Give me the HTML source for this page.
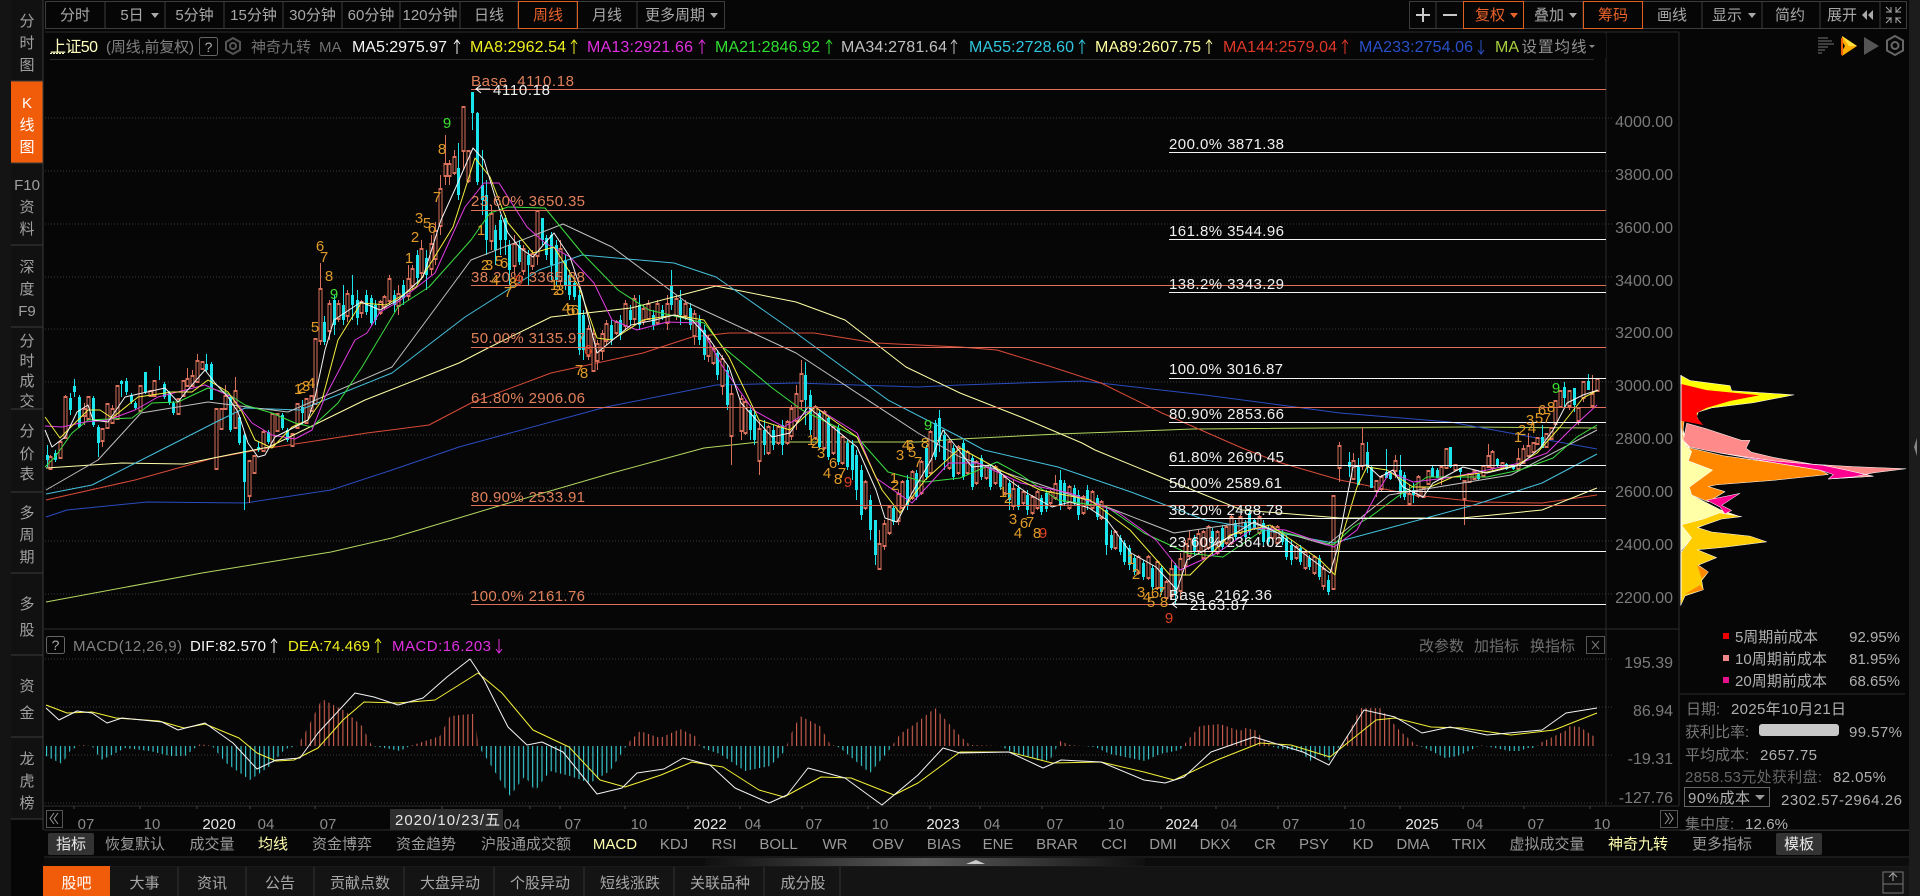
<!DOCTYPE html>
<html><head><meta charset="utf-8"><title>上证50</title>
<style>
html,body{margin:0;padding:0;background:#060606;width:1920px;height:896px;overflow:hidden}
svg{display:block;font-family:"Liberation Sans","Noto Sans CJK SC",sans-serif}
.g{fill:#a8a8a8;font-size:15px}
.s{fill:#a0a0a0;font-size:15px;text-anchor:middle}
.ax{fill:#7a7a7a;font-size:16px;text-anchor:end}
.xl{fill:#8a8a8a;font-size:15px;text-anchor:middle}
.xy{fill:#e8e8e8;font-size:15px;text-anchor:middle}
.fo{fill:#e0805a;font-size:15px}
.fw{fill:#f0f0f0;font-size:15px}
.n{fill:#e09a28;font-size:15px;text-anchor:middle}
.i{fill:#9a9a9a;font-size:15px;text-anchor:middle}
.t{fill:#a8a8a8;font-size:15px;text-anchor:middle}
.c{fill:#b0b0b0;font-size:15px}
.ma{font-size:16px}
.ln{fill:none;stroke-width:1;stroke-linejoin:round}
</style></head><body>
<svg xmlns="http://www.w3.org/2000/svg" width="1920" height="896" viewBox="0 0 1920 896">
<defs>
<linearGradient id="gs" x1="0" x2="1" y1="0" y2="0"><stop offset="0" stop-color="#101010"/><stop offset=".5" stop-color="#5a5a5a"/><stop offset="1" stop-color="#101010"/></linearGradient>
<pattern id="pr" patternUnits="userSpaceOnUse" x="46" y="0" width="4.63" height="10"><rect width="1.1" height="10" fill="#d06050"/></pattern>
<pattern id="pc" patternUnits="userSpaceOnUse" x="46" y="0" width="4.63" height="10"><rect width="1.1" height="10" fill="#38d0d8"/></pattern>
<clipPath id="cu"><rect x="44" y="640" width="1562" height="106"/></clipPath>
<clipPath id="cd"><rect x="44" y="746" width="1562" height="60"/></clipPath>
<path id="hp" d="M46 746L46 756L62 764L70 751L80 745L92 746L101 760L110 756L125 748L150 751L170 756L185 756L200 744L212 746L226 763L250 780L270 766L285 749L297 746L305 733L322 699L345 711L362 726L372 746L385 748L400 751L410 746L425 741L440 736L450 716L470 714L475 714L478 746L485 756L510 796L525 776L535 791L550 771L570 776L590 783L610 771L625 748L630 741L640 731L660 738L680 729L695 736L700 746L705 749L720 754L745 771L770 766L785 751L790 736L800 716L820 726L830 744L840 748L870 773L890 749L900 734L915 724L935 708L960 736L970 745L1000 746L1010 751L1040 761L1050 760L1060 741L1070 745L1095 747L1110 754L1145 761L1160 754L1180 750L1187 741L1200 726L1220 724L1240 731L1245 728L1255 730L1265 741L1275 748L1300 751L1310 761L1320 754L1330 761L1338 748L1345 741L1360 708L1380 708L1400 731L1415 744L1425 748L1445 758L1458 756L1475 748L1480 745L1490 747L1510 751L1520 751L1527 748L1535 748L1540 743L1565 731L1570 726L1580 727L1590 734L1597 738L1597 746Z"/>
<path id="rb" d="M50 458V468M60 443V457M65 398V437M84 410V415M88 398V418M102 430V440M107 405V427M112 410V422M117 387V418M140 387V410M150 392V395M154 382V395M178 400V413M183 382V395M187 380V385M192 377V385M197 362V381M202 363V368M216 410V468M221 410V428M225 397V408M235 392V427M249 462V495M254 457V472M263 433V450M272 415V445M277 415V430M292 435V445M297 405V427M306 400V422M311 397V410M315 340V403M320 290V340M329 305V330M338 305V318M347 295V315M361 303V312M380 303V312M384 298V306M389 280V300M398 295V305M408 280V295M412 270V285M421 250V272M431 245V268M435 232V258M440 190V225M445 165V175M449 165V175M454 158V172M463 108V150M468 152V180M491 215V240M514 245V265M523 250V270M532 255V265M537 212V255M560 250V280M588 330V355M593 335V370M597 345V360M602 335V350M606 325V340M616 323V332M625 305V325M634 300V318M643 310V320M648 305V318M657 305V322M667 305V322M676 300V315M685 305V315M694 315V335M708 340V355M713 350V362M722 360V385M731 395V435M741 400V430M745 403V432M759 430V460M768 428V452M778 428V442M787 423V442M791 410V435M796 395V420M801 375V400M815 408V437M824 413V447M833 428V452M842 438V462M865 483V507M879 545V568M884 525V545M889 508V532M898 495V520M902 483V507M912 473V497M921 463V492M930 433V472M949 443V467M958 448V472M967 453V472M976 463V482M986 468V477M995 468V482M1004 478V492M1013 490V505M1023 493V502M1032 498V512M1037 493V507M1050 493V502M1055 485V497M1069 488V507M1083 498V512M1092 493V507M1101 503V517M1115 533V547M1138 558V572M1148 558V577M1157 563V587M1166 583V597M1171 570V595M1180 560V590M1185 545V565M1189 540V555M1198 535V550M1203 533V557M1208 528V547M1217 533V552M1226 528V542M1231 518V542M1240 518V532M1259 518V532M1272 528V537M1277 528V542M1296 548V557M1305 553V567M1314 558V572M1323 570V585M1333 497V588M1339 447V467M1353 462V478M1362 445V465M1376 482V490M1381 478V488M1395 462V470M1409 495V503M1418 478V495M1423 489V496M1428 472V483M1441 468V478M1446 450V467M1455 466V469M1464 482V498M1469 475V481M1474 472V478M1483 467V475M1488 457V466M1492 453V467M1502 464V467M1518 460V468M1523 450V462M1528 447V455M1533 444V451M1537 439V443M1546 435V446M1551 429V438M1555 402V423M1560 392V406M1569 392V405M1578 409V420M1583 383V397M1592 395V405M1597 380V390"/>
</defs>
<rect width="1920" height="896" fill="#060606"/>
<!-- outer bands -->
<rect x="0" y="0" width="11" height="896" fill="#141414"/>
<rect x="1909" y="0" width="11" height="896" fill="#1c1c1c"/>
<path d="M1917 438l-3 9 3 9z" fill="#888"/>
<!-- sidebar -->
<rect x="11" y="0" width="32" height="819" fill="#111"/>
<rect x="11" y="81" width="32" height="82" fill="#f05c0a"/>
<g stroke="#3c3c3c" shape-rendering="crispEdges"><path d="M11 81H43M11 163H43M11 245H43M11 327H43M11 409H43M11 492H43M11 573H43M11 655H43M11 737H43M11 819H43M43 0V830"/></g>
<g>
<text class="s" x="27" y="26">分</text><text class="s" x="27" y="48">时</text><text class="s" x="27" y="70">图</text>
<text class="s" x="27" y="108" style="fill:#fff">K</text><text class="s" x="27" y="130" style="fill:#fff">线</text><text class="s" x="27" y="152" style="fill:#fff">图</text>
<text class="s" x="27" y="190">F10</text><text class="s" x="27" y="212">资</text><text class="s" x="27" y="234">料</text>
<text class="s" x="27" y="272">深</text><text class="s" x="27" y="294">度</text><text class="s" x="27" y="316">F9</text>
<text class="s" x="27" y="346">分</text><text class="s" x="27" y="366">时</text><text class="s" x="27" y="386">成</text><text class="s" x="27" y="406">交</text>
<text class="s" x="27" y="436">分</text><text class="s" x="27" y="459">价</text><text class="s" x="27" y="479">表</text>
<text class="s" x="27" y="518">多</text><text class="s" x="27" y="540">周</text><text class="s" x="27" y="562">期</text>
<text class="s" x="27" y="609">多</text><text class="s" x="27" y="635">股</text>
<text class="s" x="27" y="691">资</text><text class="s" x="27" y="718">金</text>
<text class="s" x="27" y="764">龙</text><text class="s" x="27" y="786">虎</text><text class="s" x="27" y="808">榜</text>
</g>
<!-- top toolbar left -->
<rect x="45.500" y="1.500" width="679" height="27" fill="none" stroke="#3c3c3c"/>
<path d="M105 2V28M165 2V28M224 2V28M283 2V28M342 2V28M400 2V28M460 2V28M518 2V28M577 2V28M637 2V28" stroke="#3c3c3c" shape-rendering="crispEdges"/>
<rect x="518.500" y="1.500" width="59" height="27" fill="none" stroke="#e0601c"/>
<g>
<text class="t" x="75" y="20">分时</text><text class="t" x="132" y="20">5日</text><path d="M151 13h8l-4 5z" fill="#aaa"/>
<text class="t" x="194.500" y="20">5分钟</text><text class="t" x="253.500" y="20">15分钟</text><text class="t" x="312.500" y="20">30分钟</text><text class="t" x="371" y="20">60分钟</text><text class="t" x="430" y="20">120分钟</text>
<text class="t" x="489" y="20">日线</text><text class="t" x="548" y="20" style="fill:#e8622a">周线</text><text class="t" x="607" y="20">月线</text>
<text class="t" x="675" y="20">更多周期</text><path d="M710 13h8l-4 5z" fill="#aaa"/>
</g>
<!-- top toolbar right -->
<rect x="1409.500" y="1.500" width="497" height="27" fill="none" stroke="#3c3c3c"/>
<path d="M1436 2V28M1583 2V28M1702 2V28M1762 2V28M1820 2V28M1880 2V28" stroke="#3c3c3c" shape-rendering="crispEdges"/>
<rect x="1463.500" y="1.500" width="60" height="27" fill="none" stroke="#e0601c"/>
<rect x="1583.500" y="1.500" width="59" height="27" fill="none" stroke="#e0601c"/>
<path d="M1416 15h14M1423 8v14" stroke="#c8c8c8" stroke-width="2"/><path d="M1443 15h14" stroke="#c8c8c8" stroke-width="2"/>
<text class="t" x="1490" y="20" style="fill:#e8622a">复权</text><path d="M1510 13h8l-4 5z" fill="#e8622a"/>
<text class="t" x="1549" y="20">叠加</text><path d="M1569 13h8l-4 5z" fill="#aaa"/>
<text class="t" x="1613" y="20" style="fill:#e8622a">筹码</text>
<text class="t" x="1672" y="20">画线</text>
<text class="t" x="1727" y="20">显示</text><path d="M1748 13h8l-4 5z" fill="#aaa"/>
<text class="t" x="1790" y="20">简约</text>
<text class="t" x="1842" y="20">展开</text><path d="M1867 10l-5 5 5 5zM1873 10l-5 5 5 5z" fill="#aaa"/>
<path d="M1886 7l5 5v-5M1901 7l-5 5v-5M1886 23l5-5v5M1901 23l-5-5v5M1886 12h5M1901 12h-5M1886 18h5M1901 18h-5" stroke="#aaa" fill="none"/>
<!-- frames -->
<path d="M45 32H1679M1606 32V806M1679 32V806M44 629H1679M44 806H1679M44 830H1909M44 857H1909M44 866H1909M1680 694H1905" stroke="#2c2c2c" shape-rendering="crispEdges"/>
<path d="M50 59.500H1594" stroke="#2a2a2a" shape-rendering="crispEdges"/>
<!-- grid -->
<g stroke="#3a3a3a" stroke-dasharray="1 2" shape-rendering="crispEdges">
<path d="M45 118H1612M45 171H1612M45 224H1612M45 277H1612M45 329H1612M45 382H1612M45 435H1612M45 488H1612M45 541H1612M45 594H1612M45 659H1612M45 707H1612M45 755H1612M45 803H1612"/>
</g>
<!-- MA long lines -->
<polyline class="ln" stroke="#b4d860" points="46,602 202,573 331,552 392,538 502,505 612,473 704,448 759,442 918,442 960,439 1058,434 1193,429 1462,427 1597,428"/>
<polyline class="ln" stroke="#2a4cc0" stroke-width="1.500" points="46,517 67,510 147,502 245,503 331,490 392,470 459,447 606,407 716,385 796,383 918,387 960,385 1082,381 1205,395 1340,413 1450,422 1597,449"/>
<polyline class="ln" stroke="#d84a38" points="46,500 135,480 214,458 269,448 367,433 429,425 471,403 551,373 643,353 692,337 729,333 814,333 876,343 960,347 997,350 1052,367 1101,383 1162,413 1242,448 1278,462 1340,480 1413,495 1480,502 1542,503 1597,495"/>
<!-- candles -->
<g transform="translate(.5 0)" shape-rendering="crispEdges" fill="none">
<path stroke="#d8705c" d="M50 455V470M60 440V458M65 395V437M84 403V425M88 398V420M102 428V447M107 403V427M112 405V422M117 387V418M140 387V412M150 390V396M154 382V397M178 398V413M183 382V397M187 368V387M192 370V385M197 354V381M202 363V368M216 410V468M221 408V430M225 385V408M235 377V427M249 462V503M254 457V472M263 430V450M272 415V445M277 415V430M292 435V447M297 403V427M306 400V422M311 397V410M315 340V403M320 263V345M329 300V340M338 300V322M347 290V322M361 300V318M380 300V315M384 295V310M389 275V305M398 285V315M408 265V300M412 265V290M421 240V280M431 235V275M435 222V265M440 175V235M445 135V185M449 160V185M454 150V175M463 108V170M468 150V183M491 205V250M514 235V275M523 245V275M532 250V270M537 210V265M560 240V285M588 325V360M593 328V372M597 340V370M602 330V360M606 320V345M616 320V335M625 300V330M634 295V325M643 305V325M648 300V320M657 300V325M667 295V330M676 295V320M685 300V320M694 310V345M708 335V362M713 345V365M722 355V395M731 385V465M741 395V440M745 400V435M759 420V475M768 425V455M778 425V445M787 420V445M791 405V440M796 385V430M801 360V410M815 405V440M824 410V450M833 425V455M842 435V465M865 480V510M879 530V570M884 520V550M889 505V535M898 490V525M902 480V510M912 470V500M921 460V495M930 430V475M949 440V470M958 445V475M967 450V475M976 460V485M986 465V480M995 465V485M1004 475V495M1013 480V510M1023 490V505M1032 495V515M1037 490V510M1050 490V505M1055 475V500M1069 485V510M1083 495V515M1092 490V510M1101 500V520M1115 530V550M1138 555V575M1148 555V580M1157 560V590M1166 580V600M1171 560V600M1180 553V600M1185 540V575M1189 530V560M1198 530V555M1203 530V560M1208 525V550M1217 530V555M1226 525V545M1231 515V545M1240 515V535M1259 515V535M1272 525V540M1277 525V545M1296 545V560M1305 550V570M1314 555V575M1323 565V590M1333 496V590M1339 442V482M1353 453V480M1362 427V470M1376 482V497M1381 475V492M1395 455V478M1409 485V505M1418 475V498M1423 487V498M1428 472V485M1441 467V485M1446 450V468M1455 465V470M1464 482V525M1469 473V483M1474 470V480M1483 465V477M1488 444V467M1492 450V470M1502 463V468M1518 448V470M1523 445V463M1528 433V455M1533 442V453M1537 437V445M1546 433V448M1551 427V440M1555 402V425M1560 390V408M1569 392V410M1578 407V425M1583 383V402M1592 375V405M1597 380V392"/>
<use href="#rb" stroke="#d8705c" stroke-width="4" stroke-linecap="square"/>
<use href="#rb" stroke="#070707" stroke-width="2"/>
<path stroke="#1ce4ec" d="M47 445V467M55 450V462M70 393V415M74 379V397M79 395V428M93 396V427M98 425V457M121 380V397M126 378V395M131 393V404M135 401V410M145 372V394M159 366V380M164 382V399M169 391V405M173 401V415M206 354V372M211 362V400M230 395V432M239 415V445M244 433V510M258 442V452M268 430V444M282 413V430M287 428V442M302 400V425M324 316V345M334 295V335M343 285V325M352 275V320M357 290V325M366 290V315M371 295V325M375 300V325M394 290V312M403 280V305M417 250V285M426 250V290M458 143V200M472 92V130M477 112V185M482 150V215M486 180V255M495 225V265M500 215V255M505 215V255M509 240V285M519 240V265M528 250V285M542 218V245M546 235V260M551 232V280M556 240V285M565 255V290M569 270V300M574 280V300M579 290V355M583 310V360M611 320V345M620 315V340M630 305V325M639 295V330M653 310V330M662 305V320M671 270V310M680 290V325M690 303V330M699 315V345M704 325V360M717 350V380M727 365V410M750 405V440M754 410V445M764 420V455M773 425V450M782 420V455M805 362V425M810 390V435M819 410V450M828 415V460M838 425V465M847 440V470M852 440V480M856 450V500M861 465V520M870 495V540M875 520V565M893 505V525M907 475V510M916 470V500M926 445V480M935 420V460M939 410V452M944 430V470M953 445V480M963 440V480M972 455V490M981 455V480M990 465V490M1000 470V490M1009 480V510M1018 485V510M1027 490V515M1041 495V515M1046 490V512M1060 470V510M1064 480V505M1074 485V505M1078 490V520M1087 485V510M1097 495V520M1106 505V555M1111 530V550M1120 535V555M1124 540V565M1129 545V570M1134 555V575M1143 560V580M1152 565V590M1161 565V595M1175 563V605M1194 535V555M1212 528V555M1222 525V550M1235 520V540M1245 520V540M1249 510V535M1254 518V530M1263 520V545M1268 525V545M1282 530V545M1286 535V560M1291 540V565M1300 545V565M1309 555V570M1319 555V580M1328 575V595M1349 452V477M1358 458V485M1367 442V473M1371 465V488M1386 449V478M1390 472V480M1400 455V498M1404 472V500M1413 483V503M1432 465V477M1437 468V478M1450 447V468M1460 468V480M1478 473V480M1497 458V467M1506 463V470M1513 465V470M1542 425V448M1564 382V407M1574 388V412M1588 374V390"/>
<path stroke="#1ce4ec" stroke-width="3" d="M47 455V460M55 453V460M70 398V410M74 386V392M79 397V427M93 398V425M98 427V443M121 381V384M126 381V392M131 395V402M135 403V408M145 372V392M164 384V397M169 393V403M173 403V413M206 364V370M211 364V400M230 397V430M239 417V443M244 435V482M258 447V450M268 432V442M282 415V428M287 430V440M302 407V413M324 322V342M334 300V325M343 305V320M352 295V305M357 300V318M366 295V312M371 298V323M375 305V320M394 295V305M403 285V298M417 255V278M426 258V275M458 168V195M472 92V113M477 113V182M482 185V200M486 195V240M495 230V250M500 220V240M505 218V240M509 245V270M519 245V262M528 255V265M542 218V240M546 238V255M551 235V265M556 245V280M565 260V285M569 275V295M574 283V297M579 295V350M583 315V350M611 325V340M620 320V335M630 310V320M639 305V325M653 315V325M662 310V318M671 285V305M680 300V315M690 308V325M699 320V340M704 330V355M717 353V375M727 370V405M750 410V430M754 415V440M764 430V445M773 430V445M782 425V445M805 375V400M810 395V430M819 413V447M828 418V457M838 428V462M847 443V467M852 445V470M856 455V490M861 470V515M870 500V530M875 520V555M893 508V522M907 480V505M916 473V497M926 448V477M935 423V457M939 418V440M944 435V460M953 448V477M963 443V477M972 458V487M981 458V477M990 468V487M1000 473V487M1009 483V500M1018 488V507M1027 495V510M1041 498V512M1046 493V509M1060 480V505M1064 483V502M1074 488V502M1078 495V515M1087 490V505M1097 498V517M1106 510V545M1111 535V548M1120 538V552M1124 543V562M1129 548V565M1134 558V572M1143 563V577M1152 568V587M1161 568V592M1175 565V595M1194 538V552M1212 531V552M1222 528V547M1235 523V537M1245 523V537M1249 513V532M1254 520V528M1263 523V542M1268 528V542M1282 533V542M1286 538V557M1291 545V560M1300 548V562M1309 558V567M1319 558V577M1328 580V592M1349 462V467M1358 467V485M1367 452V467M1371 467V488M1386 472V478M1390 473V479M1400 470V492M1404 475V497M1413 490V495M1432 468V477M1437 470V478M1450 447V467M1460 468V472M1478 474V479M1497 459V466M1506 464V469M1513 466V469M1542 437V448M1564 387V398M1574 388V405M1588 381V390"/>
</g>
<polyline class="ln" stroke="#ffffa8" points="46,468 122,463 184,464 233,454 269,447 365,400 459,363 490,347 551,317 631,308 716,286 796,302 845,320 906,367 960,393 1021,417 1082,443 1095,450 1168,480 1242,510 1340,518 1462,518 1542,510 1597,488"/>
<polyline class="ln" stroke="#45c0dc" points="46,494 92,485 165,448 220,420 245,408 300,410 392,373 465,317 539,270 582,255 674,263 716,277 796,333 888,400 960,437 984,450 1058,467 1131,492 1205,520 1291,535 1333,543 1389,528 1474,505 1542,483 1597,454"/>
<polyline class="ln" stroke="#c0c0c0" points="46,490 98,460 141,413 208,402 288,412 392,367 471,260 563,224 612,247 686,302 796,353 918,433 960,457 1021,478 1107,507 1174,533 1248,522 1327,545 1389,495 1511,475 1597,430"/>
<polyline class="ln" stroke="#3ce040" points="45,467 55,457 72,433 88,420 132,418 152,403 178,402 208,388 225,392 245,405 272,413 295,423 312,427 338,403 362,367 398,307 429,287 471,240 490,213 508,207 545,208 582,253 618,290 649,310 704,323 723,347 771,387 802,410 857,437 888,472 925,482 960,478 997,462 1021,475 1058,500 1107,507 1144,533 1187,553 1223,557 1266,528 1303,537 1333,545 1353,527 1370,517 1397,497 1427,477 1460,477 1487,477 1520,470 1553,458 1577,437 1597,425"/>
<polyline class="ln" stroke="#e23ce2" points="45,426 62,427 85,422 108,420 135,410 158,397 205,385 232,397 252,423 272,435 295,439 312,430 325,397 355,340 367,333 380,312 398,302 435,273 465,207 484,183 499,183 527,227 545,243 570,257 594,283 612,320 637,330 667,322 698,323 723,367 753,410 784,427 815,407 857,433 876,478 912,503 949,463 978,463 1021,483 1070,493 1119,513 1156,540 1180,570 1217,553 1254,528 1285,530 1334,547 1357,530 1377,493 1390,472 1413,482 1430,480 1453,477 1487,470 1520,463 1547,453 1573,427 1597,405"/>
<polyline class="ln" stroke="#f4f040" points="45,417 60,438 88,410 100,410 112,418 138,397 172,392 192,392 208,380 228,392 242,412 255,440 272,448 292,427 308,420 322,400 338,340 361,303 386,305 416,287 453,227 475,158 490,177 508,223 533,253 554,247 579,287 597,338 612,340 643,320 674,315 704,320 729,357 759,420 790,430 815,407 857,437 882,490 900,513 925,480 960,448 1000,470 1040,490 1090,500 1130,530 1170,575 1190,575 1230,535 1270,525 1320,560 1335,575 1340,543 1357,487 1367,467 1387,470 1413,487 1430,487 1453,477 1487,472 1517,465 1537,453 1560,427 1583,398 1598,390"/>
<polyline class="ln" stroke="#f4f4f4" points="45,430 52,447 65,437 77,412 88,405 93,420 108,422 125,397 165,388 178,402 185,393 205,370 215,383 228,397 238,412 248,443 258,457 265,455 275,437 295,427 308,420 315,397 325,350 334,320 361,302 380,310 398,300 423,277 441,220 456,187 473,148 484,160 496,200 508,233 520,248 533,257 545,243 554,233 570,257 582,293 597,353 615,338 631,325 655,320 674,315 692,320 710,340 729,367 741,403 772,437 790,433 808,407 824,420 857,447 876,490 885,518 897,522 912,493 931,460 943,430 972,467 991,465 1009,480 1027,493 1052,507 1070,502 1089,508 1107,520 1131,553 1156,567 1177,590 1187,560 1205,550 1229,537 1254,522 1278,533 1303,553 1330,573 1337,550 1347,497 1353,467 1367,465 1380,477 1393,470 1403,487 1423,497 1433,483 1463,467 1487,473 1520,465 1540,448 1553,430 1567,403 1583,395 1598,390"/>
<!-- fib lines -->
<path d="M471 89.500H1606M471 210.500H1606M471 285.500H1606M471 347.500H1606M471 407.500H1606M471 505.500H1606M471 604.500H1606" stroke="#e0705a" shape-rendering="crispEdges"/>
<path d="M1169 152.500H1606M1169 239.500H1606M1169 292.500H1606M1169 378.500H1606M1169 422.500H1606M1169 465.500H1606M1169 491.500H1606M1169 518.500H1606M1169 551.500H1606M1169 604.500H1606" stroke="#f4f4f4" shape-rendering="crispEdges"/>
<!-- fib labels -->
<g>
<text class="fo" x="471" y="86" textLength="103">Base &#160;4110.18</text>
<text class="fw" x="493" y="95" textLength="57">4110.18</text><path d="M490 89h-14m5-4l-5 4 5 4" stroke="#fff" fill="none"/>
<text class="fo" x="471" y="206" textLength="114">23.60% 3650.35</text>
<text class="fo" x="471" y="282" textLength="114">38.20% 3365.88</text>
<text class="fo" x="471" y="343" textLength="114">50.00% 3135.97</text>
<text class="fo" x="471" y="403" textLength="114">61.80% 2906.06</text>
<text class="fo" x="471" y="502" textLength="114">80.90% 2533.91</text>
<text class="fo" x="471" y="601" textLength="114">100.0% 2161.76</text>
<text class="fw" x="1169" y="149" textLength="115">200.0% 3871.38</text>
<text class="fw" x="1169" y="236" textLength="115">161.8% 3544.96</text>
<text class="fw" x="1169" y="289" textLength="115">138.2% 3343.29</text>
<text class="fw" x="1169" y="374" textLength="114">100.0% 3016.87</text>
<text class="fw" x="1169" y="419" textLength="115">80.90% 2853.66</text>
<text class="fw" x="1169" y="462" textLength="115">61.80% 2690.45</text>
<text class="fw" x="1169" y="488" textLength="113">50.00% 2589.61</text>
<text class="fw" x="1169" y="515" textLength="114">38.20% 2488.78</text>
<text class="fw" x="1169" y="547" textLength="114">23.60% 2364.02</text>
<text class="fw" x="1169" y="600" textLength="103">Base &#160;2162.36</text>
<text class="fw" x="1190" y="610" textLength="58">2163.87</text><path d="M1187 604h-15m5-4l-5 4 5 4" stroke="#fff" fill="none"/>
</g>
<!-- nine-turn digits -->
<g>
<text class="n" x="447" y="128" style="fill:#3ce030">9</text><text class="n" x="442" y="154">8</text><text class="n" x="437" y="202">7</text><text class="n" x="419" y="223">3</text><text class="n" x="427" y="228">5</text><text class="n" x="432" y="233">6</text><text class="n" x="415" y="242">2</text><text class="n" x="409" y="263">1</text>
<text class="n" x="320" y="251">6</text><text class="n" x="324" y="262">7</text><text class="n" x="329" y="281">8</text><text class="n" x="334" y="299" style="fill:#3ce030">9</text><text class="n" x="315" y="332">5</text>
<text class="n" x="298" y="394">1</text><text class="n" x="302" y="393">2</text><text class="n" x="306" y="391">3</text><text class="n" x="311" y="388">4</text>
<text class="n" x="481" y="235">1</text><text class="n" x="485" y="270">2</text><text class="n" x="489" y="270">3</text><text class="n" x="499" y="266">5</text><text class="n" x="504" y="268">6</text><text class="n" x="495" y="285">4</text><text class="n" x="513" y="288">8</text><text class="n" x="519" y="285" style="fill:#e04020">9</text><text class="n" x="508" y="297">7</text>
<text class="n" x="554" y="290">1</text><text class="n" x="557" y="295">2</text><text class="n" x="560" y="295">3</text><text class="n" x="566" y="313">4</text><text class="n" x="571" y="315">5</text><text class="n" x="575" y="315">6</text>
<text class="n" x="588" y="355" style="fill:#e04020">6</text><text class="n" x="579" y="375">7</text><text class="n" x="584" y="378">8</text>
<text class="n" x="811" y="445">1</text><text class="n" x="815" y="448">2</text><text class="n" x="821" y="458">3</text><text class="n" x="833" y="468">6</text><text class="n" x="827" y="478">4</text><text class="n" x="842" y="478">7</text><text class="n" x="838" y="484">8</text><text class="n" x="848" y="487" style="fill:#e04020">9</text>
<text class="n" x="894" y="483">1</text><text class="n" x="895" y="490">2</text><text class="n" x="928" y="430" style="fill:#3ce030">9</text><text class="n" x="900" y="460">3</text><text class="n" x="912" y="457">5</text><text class="n" x="918" y="467">7</text><text class="n" x="906" y="450">4</text><text class="n" x="910" y="450">6</text><text class="n" x="925" y="448">8</text>
<text class="n" x="1003" y="497">1</text><text class="n" x="1008" y="503">2</text><text class="n" x="1013" y="524">3</text><text class="n" x="1024" y="528">6</text><text class="n" x="1030" y="527">7</text><text class="n" x="1018" y="538">4</text><text class="n" x="1037" y="538">8</text><text class="n" x="1043" y="538" style="fill:#e04020">9</text>
<text class="n" x="1131" y="564">1</text><text class="n" x="1136" y="579">2</text><text class="n" x="1141" y="597">3</text><text class="n" x="1147" y="602">4</text><text class="n" x="1155" y="598">6</text><text class="n" x="1161" y="597">7</text><text class="n" x="1151" y="607">5</text><text class="n" x="1164" y="607">8</text><text class="n" x="1169" y="623" style="fill:#e04020">9</text>
<text class="n" x="1556" y="393" style="fill:#3ce030">9</text><text class="n" x="1551" y="412">8</text><text class="n" x="1542" y="415">6</text><text class="n" x="1530" y="425">3</text><text class="n" x="1539" y="423">5</text><text class="n" x="1547" y="423">7</text><text class="n" x="1522" y="435">2</text><text class="n" x="1532" y="433">4</text><text class="n" x="1518" y="442">1</text>
</g>
<!-- info row -->
<rect x="46" y="34" width="1560" height="24" fill="#060606"/>
<text x="50" y="52" font-size="16" fill="#ffffc0" textLength="48">上证50</text>
<path d="M50 53.500h14" stroke="#ffffc0" stroke-dasharray="2 1"/>
<text x="106" y="52" font-size="15" fill="#808080" textLength="88">(周线,前复权)</text>
<rect x="199.500" y="37.500" width="18" height="18" rx="2" fill="none" stroke="#666"/><text x="208.500" y="52" font-size="14" fill="#aaa" text-anchor="middle">?</text>
<path d="M233 38l7 4v8l-7 4-7-4v-8z" fill="none" stroke="#555" stroke-width="2"/><circle cx="233" cy="46" r="3" fill="none" stroke="#555" stroke-width="2"/>
<text x="251" y="52" font-size="15" fill="#707070">神奇九转</text>
<text x="319" y="52" font-size="15" fill="#707070">MA</text>
<g class="ma">
<text x="352" y="52" fill="#f4f4f4" textLength="95">MA5:2975.97</text>
<text x="470" y="52" fill="#f0f020" textLength="96">MA8:2962.54</text>
<text x="587" y="52" fill="#e030e0" textLength="106">MA13:2921.66</text>
<text x="715" y="52" fill="#30e030" textLength="105">MA21:2846.92</text>
<text x="841" y="52" fill="#c0c0c0" textLength="106">MA34:2781.64</text>
<text x="969" y="52" fill="#30c8e0" textLength="105">MA55:2728.60</text>
<text x="1095" y="52" fill="#ffffa0" textLength="106">MA89:2607.75</text>
<text x="1223" y="52" fill="#e03828" textLength="114">MA144:2579.04</text>
<text x="1359" y="52" fill="#2850c8" textLength="114">MA233:2754.06</text>
<text x="1495" y="52" fill="#a8d040">MA</text>
<text x="1521.500" y="52" font-size="15.500" fill="#909090" textLength="65">设置均线</text>
</g>
<path d="M1589 45h6l-3 3z" fill="#888"/>
<g fill="none" stroke-width="1">
<path d="M457 54V40m-3 4l3-4 3 4" stroke="#f4f4f4"/><path d="M574 54V40m-3 4l3-4 3 4" stroke="#f0f020"/><path d="M702 54V40m-3 4l3-4 3 4" stroke="#e030e0"/><path d="M829 54V40m-3 4l3-4 3 4" stroke="#30e030"/><path d="M954 54V40m-3 4l3-4 3 4" stroke="#c0c0c0"/><path d="M1082 54V40m-3 4l3-4 3 4" stroke="#30c8e0"/><path d="M1209 54V40m-3 4l3-4 3 4" stroke="#ffffa0"/><path d="M1345 54V40m-3 4l3-4 3 4" stroke="#e03828"/><path d="M1481 40v14m-3-4l3 4 3-4" stroke="#2850c8"/>
</g>
<!-- right panel icons -->
<path d="M1818 38h10M1818 41h14M1818 44h16M1818 47h10M1818 50h7M1818 53h4" stroke="#777"/>
<path d="M1842 36l15 10-15 10v-5l3-5-3-5z" fill="#ffb000"/><path d="M1842 36l15 10-8 0z" fill="#ffe040"/><path d="M1842 38v17" stroke="#f06000" stroke-width="2"/>
<path d="M1864 37l15 9-15 9z" fill="#555"/>
<path d="M1895 36l8 4.500v10l-8 4.500-8-4.500v-10z" fill="none" stroke="#666" stroke-width="2"/><circle cx="1895" cy="45.500" r="3.500" fill="none" stroke="#666" stroke-width="2"/>
<!-- price axis -->
<g>
<text class="ax" x="1673" y="127">4000.00</text><text class="ax" x="1673" y="180">3800.00</text><text class="ax" x="1673" y="233">3600.00</text><text class="ax" x="1673" y="286">3400.00</text><text class="ax" x="1673" y="338">3200.00</text><text class="ax" x="1673" y="391">3000.00</text><text class="ax" x="1673" y="444">2800.00</text><text class="ax" x="1673" y="497">2600.00</text><text class="ax" x="1673" y="550">2400.00</text><text class="ax" x="1673" y="603">2200.00</text>
<text class="ax" x="1673" y="668">195.39</text><text class="ax" x="1673" y="716">86.94</text><text class="ax" x="1673" y="764">-19.31</text><text class="ax" x="1673" y="803">-127.76</text>
</g>
<!-- MACD head -->
<rect x="46.500" y="636.500" width="18" height="17" rx="2" fill="none" stroke="#666"/><text x="55.500" y="650" font-size="14" fill="#aaa" text-anchor="middle">?</text>
<text x="73" y="651" font-size="15" fill="#808080" textLength="109">MACD(12,26,9)</text>
<text x="190" y="651" font-size="15" fill="#f4f4f4" textLength="76">DIF:82.570</text><path d="M274 653V639m-3 4l3-4 3 4" stroke="#f4f4f4" fill="none"/>
<text x="288" y="651" font-size="15" fill="#f0f020" textLength="82">DEA:74.469</text><path d="M378 653V639m-3 4l3-4 3 4" stroke="#f0f020" fill="none"/>
<text x="392" y="651" font-size="15" fill="#e030e0" textLength="99">MACD:16.203</text><path d="M499 639v14m-3-4l3 4 3-4" stroke="#e030e0" fill="none"/>
<text x="1419" y="651" font-size="15" fill="#707070">改参数</text><text x="1474" y="651" font-size="15" fill="#707070">加指标</text><text x="1530" y="651" font-size="15" fill="#707070">换指标</text>
<rect x="1586.500" y="636.500" width="18" height="17" fill="none" stroke="#555"/><path d="M1592 641l7 8m0-8l-7 8" stroke="#777"/>
<!-- MACD histogram + curves -->
<use href="#hp" fill="url(#pr)" clip-path="url(#cu)"/>
<use href="#hp" fill="url(#pc)" clip-path="url(#cd)"/>
<polyline class="ln" stroke="#f4f038" stroke-width="1.200" points="46,705 67,713 92,712 116,718 159,721 184,728 205,724 239,738 257,753 276,761 294,760 318,748 343,720 364,702 398,703 435,700 478,673 502,693 533,730 569,747 600,780 625,787 661,775 692,762 723,767 759,790 784,797 821,777 851,778 894,795 918,783 960,752 1009,752 1052,763 1101,762 1144,772 1174,780 1217,760 1260,743 1291,745 1330,757 1376,720 1395,718 1431,727 1462,728 1511,735 1554,730 1597,713"/>
<polyline class="ln" stroke="#f4f4f4" points="46,708 59,720 77,711 92,713 107,723 122,718 162,722 178,730 205,723 233,743 257,769 276,760 300,758 318,733 355,693 374,697 398,705 423,698 447,677 470,659 484,680 508,727 527,745 542,742 563,752 597,794 622,788 637,773 664,769 683,758 710,765 735,788 769,803 787,795 808,768 845,778 882,805 918,775 943,748 960,753 1009,752 1043,768 1061,760 1101,762 1144,780 1165,783 1184,777 1211,752 1254,737 1303,752 1329,765 1364,710 1395,717 1422,733 1450,727 1487,735 1542,730 1566,713 1597,708"/>
<!-- x axis -->
<path d="M74 806v3M140 806v3M197 806v3M250 806v3M315 806v3M442 806v3M530 806v3M560 806v3M625 806v3M688 806v3M740 806v3M802 806v3M868 806v3M930 806v3M980 806v3M1042 806v3M1103 806v3M1161 806v3M1216 806v3M1278 806v3M1345 806v3M1400 806v3M1463 806v3M1524 806v3M1590 806v3" stroke="#444"/>
<rect x="46.500" y="810.500" width="16" height="17" fill="none" stroke="#555"/><path d="M54 813l-4 5.500 4 5.500M58 813l-4 5.500 4 5.500" fill="none" stroke="#999"/>
<rect x="1660.500" y="810.500" width="17" height="17" fill="none" stroke="#555"/><path d="M1665 813l4 5.500-4 5.500M1669 813l4 5.500-4 5.500" fill="none" stroke="#999"/>
<g>
<text class="xl" x="86" y="829">07</text><text class="xl" x="152" y="829">10</text><text class="xy" x="219" y="829">2020</text><text class="xl" x="266" y="829">04</text><text class="xl" x="328" y="829">07</text>
<text class="xl" x="512" y="829">04</text><text class="xl" x="573" y="829">07</text><text class="xl" x="639" y="829">10</text><text class="xy" x="710" y="829">2022</text><text class="xl" x="753" y="829">04</text><text class="xl" x="814" y="829">07</text><text class="xl" x="880" y="829">10</text><text class="xy" x="943" y="829">2023</text><text class="xl" x="992" y="829">04</text><text class="xl" x="1055" y="829">07</text><text class="xl" x="1116" y="829">10</text><text class="xy" x="1182" y="829">2024</text><text class="xl" x="1229" y="829">04</text><text class="xl" x="1291" y="829">07</text><text class="xl" x="1357" y="829">10</text><text class="xy" x="1422" y="829">2025</text><text class="xl" x="1475" y="829">04</text><text class="xl" x="1536" y="829">07</text><text class="xl" x="1602" y="829">10</text>
</g>
<rect x="390" y="809" width="113" height="21" fill="#2e2e2e"/>
<text x="395" y="825" font-size="15" fill="#e4e4e4" textLength="105">2020/10/23/五</text>
<!-- indicator row -->
<rect x="48" y="833" width="46" height="22" rx="2" fill="#333"/>
<rect x="1776" y="833" width="46" height="22" rx="2" fill="#333"/>
<g>
<text class="i" x="71" y="849" style="fill:#e8e8e8">指标</text><text class="i" x="135" y="849">恢复默认</text><text class="i" x="212" y="849">成交量</text><text class="i" x="273" y="849" style="fill:#ffffb0">均线</text><text class="i" x="342" y="849">资金博弈</text><text class="i" x="426" y="849">资金趋势</text><text class="i" x="526" y="849">沪股通成交额</text><text class="i" x="615" y="849" style="fill:#ffffb0">MACD</text><text class="i" x="674" y="849">KDJ</text><text class="i" x="724" y="849">RSI</text><text class="i" x="778.500" y="849">BOLL</text><text class="i" x="835" y="849">WR</text><text class="i" x="888" y="849">OBV</text><text class="i" x="944" y="849">BIAS</text><text class="i" x="998" y="849">ENE</text><text class="i" x="1057" y="849">BRAR</text><text class="i" x="1114" y="849">CCI</text><text class="i" x="1163" y="849">DMI</text><text class="i" x="1215" y="849">DKX</text><text class="i" x="1265" y="849">CR</text><text class="i" x="1314" y="849">PSY</text><text class="i" x="1363" y="849">KD</text><text class="i" x="1413" y="849">DMA</text><text class="i" x="1469" y="849">TRIX</text><text class="i" x="1547" y="849">虚拟成交量</text><text class="i" x="1638" y="849" style="fill:#ffffb0">神奇九转</text><text class="i" x="1722" y="849">更多指标</text><text class="i" x="1799" y="849" style="fill:#e8e8e8">模板</text>
</g>
<!-- strip -->
<rect x="44" y="858" width="1865" height="8" fill="#0c0c0c"/>
<rect x="705" y="858" width="440" height="8" fill="url(#gs)"/>
<path d="M966 864h19l-9-4z" fill="#ccc"/>
<!-- tabs -->
<rect x="44" y="867" width="1865" height="29" fill="#141414"/>
<rect x="43" y="866" width="67" height="30" fill="#f05c0a"/>
<path d="M178 867V896M246 867V896M314 867V896M404 867V896M494 867V896M584 867V896M674 867V896M764 867V896M840 867V896" stroke="#333" shape-rendering="crispEdges"/>
<g>
<text class="t" x="76.500" y="888" style="fill:#fff">股吧</text><text class="t" x="144.500" y="888">大事</text><text class="t" x="212" y="888">资讯</text><text class="t" x="280" y="888">公告</text><text class="t" x="360" y="888">贡献点数</text><text class="t" x="450" y="888">大盘异动</text><text class="t" x="540" y="888">个股异动</text><text class="t" x="630" y="888">短线涨跌</text><text class="t" x="720" y="888">关联品种</text><text class="t" x="803" y="888">成分股</text>
</g>
<path d="M1883 872h20v12h-20zM1883 884h20v9h-20z" fill="none" stroke="#777" stroke-width="1"/><path d="M1893 873v8m-4-4l4-4 4 4" fill="none" stroke="#aaa"/>
<!-- chips -->
<g transform="translate(1640 360) scale(.33333 .34188)" stroke="#fff" stroke-width="1.500" stroke-linejoin="round">
<path fill="#ffffa8" d="M122 180L140 240L155 268L145 295L218 322L200 345L150 372L155 395L245 440L300 458L240 462L175 490L155 520L122 560Z"/>
<path fill="#ffcc00" d="M122 718L122 565L155 520L130 490L125 482L190 465L240 447L305 458L245 465L172 490L215 503L330 515L380 532L250 548L172 555L230 578L175 600L205 620L185 645L190 672L135 690Z"/>
<path fill="#ff8800" stroke="none" d="M135 685L180 658L190 672ZM172 600L205 620L185 640Z"/>
<path fill="#ff8800" d="M125 125L132 180L128 215L140 255L250 280L400 300L540 322L565 335L400 352L230 365L205 370L255 385L205 415L155 395L148 372L218 322L145 295L155 268L128 235L122 180Z"/>
<path fill="#ff0090" d="M240 272L400 295L550 308L620 322L700 340L565 348L580 335L540 322L400 300ZM200 410L300 390L245 425L275 440L255 450L240 430Z"/>
<path fill="#ff8a8a" d="M140 185L195 200L305 235L330 235L318 258L335 270L400 285L520 305L640 312L798 318L700 330L640 342L565 348L700 340L620 322L550 308L400 295L240 272L150 255L130 235Z"/>
<path fill="#ffff00" d="M122 45L150 60L270 75L275 90L462 102L340 125L215 140L175 152L170 165L180 185L122 70Z"/>
<path fill="#ff0000" stroke="none" d="M122 70L200 88L358 103L270 120L200 140L170 155L172 170L190 190L135 180L122 178Z"/>
</g>
<path d="M1681 375V600" stroke="#fff"/>
<!-- legend -->
<rect x="1723" y="633" width="6" height="6" fill="#ee0000"/><rect x="1723" y="655" width="6" height="6" fill="#f08888"/><rect x="1723" y="677" width="6" height="6" fill="#e8108c"/>
<text class="c" x="1735" y="642" textLength="83">5周期前成本</text><text class="c" x="1900" y="642" text-anchor="end">92.95%</text>
<text class="c" x="1735" y="664" textLength="92">10周期前成本</text><text class="c" x="1900" y="664" text-anchor="end">81.95%</text>
<text class="c" x="1735" y="686" textLength="92">20周期前成本</text><text class="c" x="1900" y="686" text-anchor="end">68.65%</text>
<text x="1686" y="714" font-size="15" fill="#777">日期:</text><text class="c" x="1731" y="714" textLength="115">2025年10月21日</text>
<text x="1685" y="737" font-size="15" fill="#777">获利比率:</text><rect x="1759" y="724" width="80" height="12" rx="3" fill="#c8c8c8"/><text class="c" x="1849" y="737" textLength="53">99.57%</text>
<text x="1685" y="760" font-size="15" fill="#777">平均成本:</text><text class="c" x="1760" y="760" textLength="57">2657.75</text>
<text x="1685" y="782" font-size="15" fill="#666" textLength="137">2858.53元处获利盘:</text><text class="c" x="1833" y="782" textLength="53">82.05%</text>
<rect x="1684.500" y="787.500" width="85" height="19" fill="none" stroke="#666"/><text class="c" x="1688" y="803" textLength="62">90%成本</text><path d="M1755 795h10l-5 5z" fill="#999"/>
<text class="c" x="1781" y="805" textLength="121">2302.57-2964.26</text>
<text x="1685" y="829" font-size="15" fill="#777">集中度:</text><text class="c" x="1745" y="829" textLength="43">12.6%</text>
<rect x="1680" y="830" width="229" height="1" fill="#2c2c2c"/>
</svg>
</body></html>
